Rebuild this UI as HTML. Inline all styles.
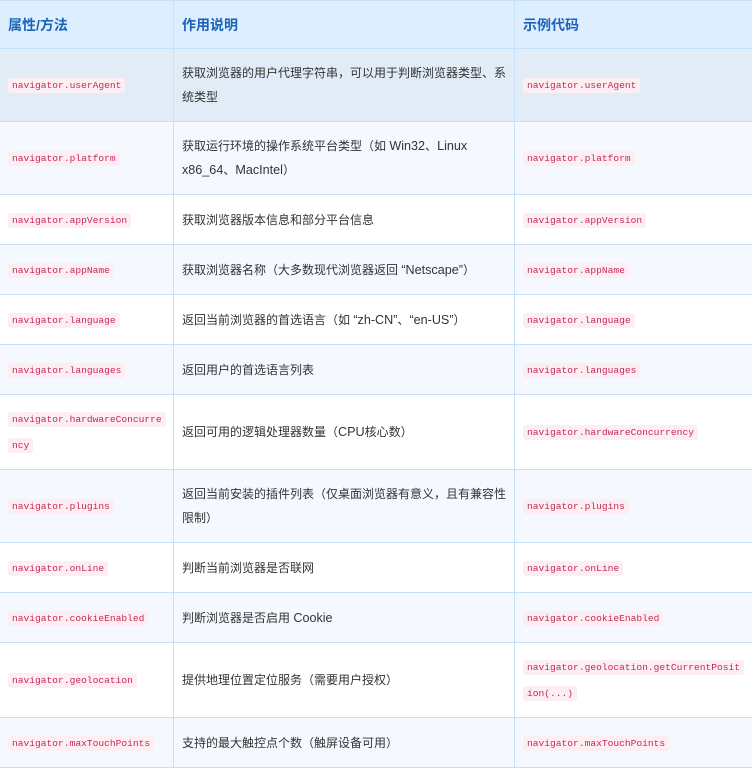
<!DOCTYPE html>
<html><head><meta charset="utf-8"><style>
*{margin:0;padding:0;box-sizing:border-box}
body{width:752px;height:769px;background:#fff;font-family:"Liberation Sans","Noto Sans CJK SC",sans-serif;overflow:hidden}
table{border-collapse:collapse;width:753px;table-layout:fixed;margin-left:-1px}
td,th{border:1px solid #c6e0f8;padding:0 8px;vertical-align:middle;font-size:12px;color:#333;line-height:24px;text-align:left;white-space:nowrap;overflow:hidden}
th{background:#ddeeff;color:#1d63b8;font-weight:bold;font-size:14px;height:48px}
tr.s td{background:#f5f9ff}
tr.h td{background:#e1ecf6}
.l{font-size:12.6px}
code{font-family:"Liberation Mono",monospace;font-size:9.6px;color:#c4285e;background:#fdeff1;padding:2px 4px;border-radius:3px;line-height:24px}
</style></head><body>
<table>
<colgroup><col style="width:174px"><col style="width:341px"><col style="width:238px"></colgroup>
<tr><th>属性/方法</th><th>作用说明</th><th>示例代码</th></tr>
<tr class="h" style="height:73px"><td><code>navigator.userAgent</code></td><td>获取浏览器的用户代理字符串，可以用于判断浏览器类型、系<br>统类型</td><td><code>navigator.userAgent</code></td></tr>
<tr class="s" style="height:73px"><td><code>navigator.platform</code></td><td>获取运行环境的操作系统平台类型（如 <span class="l">Win32</span>、<span class="l">Linux</span><br><span class="l">x86_64</span>、<span class="l">MacIntel</span>）</td><td><code>navigator.platform</code></td></tr>
<tr style="height:50px"><td><code>navigator.appVersion</code></td><td>获取浏览器版本信息和部分平台信息</td><td><code>navigator.appVersion</code></td></tr>
<tr class="s" style="height:50px"><td><code>navigator.appName</code></td><td>获取浏览器名称（大多数现代浏览器返回 <span class="l">“Netscape”</span>）</td><td><code>navigator.appName</code></td></tr>
<tr style="height:50px"><td><code>navigator.language</code></td><td>返回当前浏览器的首选语言（如 <span class="l">“zh-CN”</span>、<span class="l">“en-US”</span>）</td><td><code>navigator.language</code></td></tr>
<tr class="s" style="height:50px"><td><code>navigator.languages</code></td><td>返回用户的首选语言列表</td><td><code>navigator.languages</code></td></tr>
<tr style="height:75px"><td><code>navigator.hardwareConcurre</code><br><code>ncy</code></td><td>返回可用的逻辑处理器数量（<span class="l">CPU</span>核心数）</td><td><code>navigator.hardwareConcurrency</code></td></tr>
<tr class="s" style="height:73px"><td><code>navigator.plugins</code></td><td>返回当前安装的插件列表（仅桌面浏览器有意义，且有兼容性<br>限制）</td><td><code>navigator.plugins</code></td></tr>
<tr style="height:50px"><td><code>navigator.onLine</code></td><td>判断当前浏览器是否联网</td><td><code>navigator.onLine</code></td></tr>
<tr class="s" style="height:50px"><td><code>navigator.cookieEnabled</code></td><td>判断浏览器是否启用 <span class="l">Cookie</span></td><td><code>navigator.cookieEnabled</code></td></tr>
<tr style="height:75px"><td><code>navigator.geolocation</code></td><td>提供地理位置定位服务（需要用户授权）</td><td><code>navigator.geolocation.getCurrentPosit</code><br><code>ion(...)</code></td></tr>
<tr class="s" style="height:50px"><td><code>navigator.maxTouchPoints</code></td><td>支持的最大触控点个数（触屏设备可用）</td><td><code>navigator.maxTouchPoints</code></td></tr>
</table>
</body></html>
